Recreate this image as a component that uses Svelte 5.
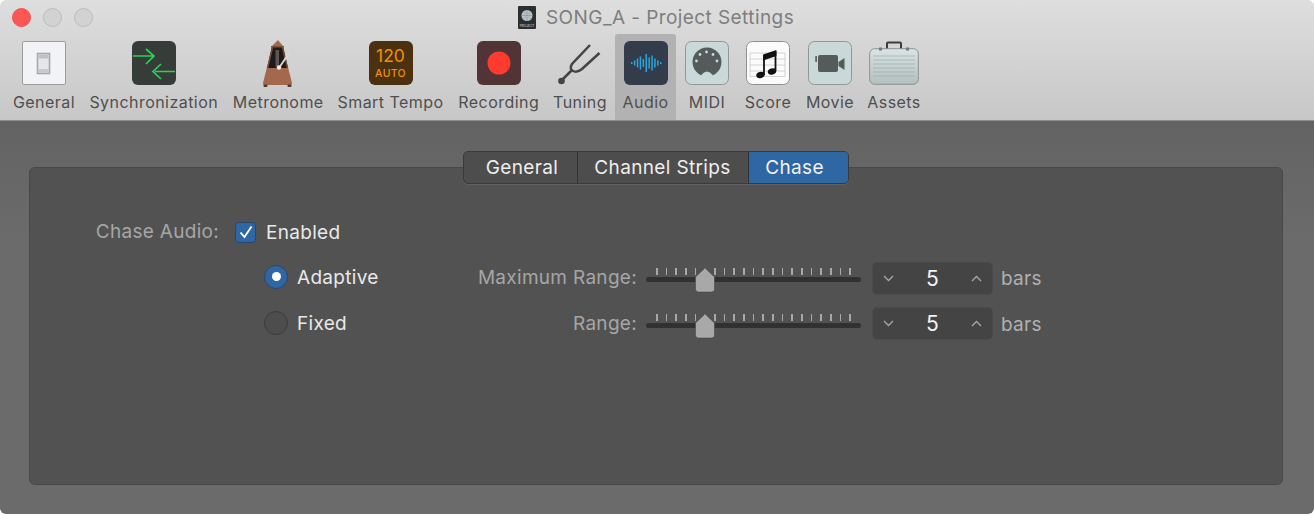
<script>
  const ticks = Array.from({ length: 21 }, (_, i) => i);
  const rows = [
    { label: 'Maximum Range:', value: 5 },
    { label: 'Range:', value: 5 }
  ];
  const bars = [2, 5, 9, 13, 8, 18, 11, 15, 9, 5, 2];
</script>

<div class="window">
  <header class="chrome">
    <div class="titlebar">
      <span class="dot red"></span>
      <span class="dot"></span>
      <span class="dot"></span>
      <svg class="doc" width="18" height="23" viewBox="0 0 18 23">
        <rect width="18" height="23" rx="1" fill="#2e2e2e" />
        <circle cx="9" cy="9.5" r="5.5" fill="#b9c4cb" />
        <circle cx="9" cy="9.5" r="1.4" fill="#eef2f4" />
        <path d="M9 4v11M3.5 9.5h11M5 5.5l8 8M13 5.5l-8 8" stroke="#7f8a91" stroke-width=".6" />
        <text x="9" y="21" text-anchor="middle" class="doctext">PROJECT</text>
      </svg>
      <span class="title">SONG_A - Project Settings</span>
    </div>

    <nav class="toolbar">
      <div class="tool">
        <svg class="icon" viewBox="0 0 44 44">
          <rect x=".5" y=".5" width="43" height="43" rx="1.5" fill="#f2f3f6" stroke="#9c9c9c" />
          <rect x="15.500" y="12.500" width="12" height="20" fill="#e4e6e8" stroke="#a6a8ab" stroke-width="1.600" />
          <rect x="16.500" y="13.500" width="10" height="4" fill="#bfc2c5" />
          <rect x="16.500" y="28" width="10" height="3.500" fill="#c6c9cc" />
        </svg>
        <span>General</span>
      </div>

      <div class="tool">
        <svg class="icon" viewBox="0 0 44 44">
          <rect width="44" height="44" rx="6" fill="#363c37" />
          <path d="M1 15h20M14 8l8 7-8 8M43 30.500H23M29 23l-8 7.500 8 7.500" fill="none" stroke="#2fcf5c" stroke-width="1.700" />
        </svg>
        <span>Synchronization</span>
      </div>

      <div class="tool">
        <svg class="icon" viewBox="0 0 44 44">
          <path d="M16 5h11l5.200 23H10.800z" fill="#1f1a19" />
          <path d="M16 5L22 -1l5 6z" fill="#a4694d" />
          <path d="M15 5h13v1.500H15z" fill="#7a503c" />
          <path d="M10.800 27h21.400L36 42q.2 2-1 2H8q-1.200 0-1-2z" fill="#a4694d" />
          <path d="M16 6l-5.200 21h1.500l5-21zM27 6l5.200 21h-1.500l-5-21z" fill="#7a503c" />
          <rect x="7.500" y="43.500" width="4" height="2.500" rx="1" fill="#4a3a33" />
          <rect x="31.500" y="43.500" width="4" height="2.500" rx="1" fill="#4a3a33" />
          <rect x="19.500" y="9" width="3.500" height="17" fill="#5c5553" />
          <path d="M23 27L33 12" stroke="#d9d9d9" stroke-width="1.800" />
          <circle cx="23" cy="26.500" r="2.200" fill="#eee" />
        </svg>
        <span>Metronome</span>
      </div>

      <div class="tool">
        <div class="tempo">
          <span class="bpm">120</span>
          <span class="auto">AUTO</span>
        </div>
        <span>Smart Tempo</span>
      </div>

      <div class="tool">
        <svg class="icon" viewBox="0 0 44 44">
          <rect width="44" height="44" rx="6" fill="#523437" />
          <circle cx="22" cy="22" r="11.500" fill="#ff3b30" />
        </svg>
        <span>Recording</span>
      </div>

      <div class="tool tune">
        <svg class="icon" viewBox="0 0 44 44">
          <path d="M32 4L14 23Q11 28 15 30T24 28L41.500 12" fill="none" stroke="#444" stroke-width="2.500" />
          <path d="M14 29L4 39" stroke="#444" stroke-width="2.500" />
          <circle cx="3.500" cy="40" r="3.300" fill="#444" />
        </svg>
        <span>Tuning</span>
      </div>

      <div class="tool active">
        <svg class="icon" viewBox="0 0 44 44">
          <rect width="44" height="44" rx="6" fill="#323c4a" />
          {#each bars as b, i}
            <rect x={7 + i * 2.900} y={22 - b / 2} width="1.500" height={b} fill="#2aa6dc" />
          {/each}
        </svg>
        <span>Audio</span>
      </div>

      <div class="tool">
        <svg class="icon" viewBox="0 0 44 44">
          <rect x=".5" y=".5" width="43" height="43" rx="6" fill="#c9d8d8" stroke="#8f9797" />
          <path d="M16 34.200A14.500 14.500 0 1 1 28 34.200Q22 27 16 34.200Z" fill="#555b5b" />
          <g fill="#c9d8d8">
            <circle cx="21.500" cy="11" r="1.400" /><circle cx="15" cy="13.500" r="1.400" /><circle cx="28" cy="13.500" r="1.400" />
            <circle cx="11.500" cy="20" r="1.400" /><circle cx="32" cy="20" r="1.400" />
          </g>
        </svg>
        <span>MIDI</span>
      </div>

      <div class="tool">
        <svg class="icon" viewBox="0 0 44 44">
          <rect x=".5" y=".5" width="43" height="43" rx="6" fill="#fbfbfb" stroke="#8f8f8f" />
          <path d="M4 12h35M4 18h35M4 24h35M4 30h35M4 35.500h35M4 12v23.500M39 12v23.500" stroke="#c9c9c9" stroke-width=".8" fill="none" />
          <path d="M18 14v20M29.500 10v20" stroke="#111" stroke-width="1.800" />
          <path d="M17.100 13.500l13.300-4.500v6l-13.300 4.500z" fill="#111" />
          <ellipse cx="14.500" cy="34" rx="4.300" ry="3.100" transform="rotate(-18 14.500 34)" fill="#111" />
          <ellipse cx="26" cy="30.500" rx="4.300" ry="3.100" transform="rotate(-18 26 30.500)" fill="#111" />
        </svg>
        <span>Score</span>
      </div>

      <div class="tool">
        <svg class="icon" viewBox="0 0 44 44">
          <rect x=".5" y=".5" width="43" height="43" rx="6" fill="#c9d8d8" stroke="#8f9797" />
          <rect x="10" y="14" width="20" height="17" rx="2" fill="#555b5b" />
          <rect x="7.300" y="15" width="1.600" height="6" fill="#555b5b" />
          <path d="M30.500 21l6-4v12l-6-4z" fill="#555b5b" />
        </svg>
        <span>Movie</span>
      </div>

      <div class="tool">
        <svg class="icon wide" viewBox="0 0 50 44">
          <defs>
            <linearGradient id="case" x1="0" y1="0" x2="0" y2="1">
              <stop offset="0" stop-color="#dbe4e4" />
              <stop offset="1" stop-color="#b3bfbf" />
            </linearGradient>
          </defs>
          <path d="M18 8V2.500q0-1 1-1h12q1 0 1 1V8" fill="none" stroke="#3c3c3c" stroke-width="2" />
          <rect x=".7" y="7.700" width="48.600" height="35.600" rx="5" fill="url(#case)" stroke="#8a9292" />
          <path d="M4 15h42M4 19h42M4 23h42M4 27h42M4 31h42M4 35h42" stroke="#9fadad" stroke-width=".7" />
          <rect x="10" y="6.500" width="3" height="3" fill="#777" />
          <rect x="37" y="6.500" width="3" height="3" fill="#777" />
        </svg>
        <span>Assets</span>
      </div>
    </nav>
  </header>

  <main class="body">
    <div class="segmented">
      <span class="seg one">General</span>
      <span class="seg two">Channel Strips</span>
      <span class="seg three">Chase</span>
    </div>

    <section class="panel">
      <div class="form">
        <span class="lead">Chase Audio:</span>
        <div class="check">
          <span class="box">
            <svg width="14" height="14" viewBox="0 0 14 14">
              <path d="M1.500 7.500L5.500 12 12.500 1.500" fill="none" stroke="#fff" stroke-width="1.800" />
            </svg>
          </span>
          <span class="opt">Enabled</span>
        </div>

        {#each rows as row, i}
          <div class="radio">
            <span class="disc" class:on={i === 0}></span>
            <span class="opt">{i === 0 ? 'Adaptive' : 'Fixed'}</span>
          </div>
          <span class="rlabel">{row.label}</span>
          <div class="slider">
            <div class="ticks">
              {#each ticks as t (t)}<i></i>{/each}
            </div>
            <div class="track"></div>
            <svg class="thumb" width="22" height="26" viewBox="0 0 22 26">
              <path d="M11 1L20.500 10V22q0 3-3 3H4.500q-3 0-3-3V10z" fill="#a8a8a8" stroke="#3f3f3f" stroke-width=".5" />
            </svg>
          </div>
          <div class="stepper" class:low={i === 1}>
            <svg width="11" height="7" viewBox="0 0 11 7"><path d="M1 1l4.500 4.500L10 1" fill="none" stroke="#a8a8a8" stroke-width="1.300" /></svg>
            <span class="val">{row.value}</span>
            <svg width="11" height="7" viewBox="0 0 11 7"><path d="M1 6l4.500-4.500L10 6" fill="none" stroke="#a8a8a8" stroke-width="1.300" /></svg>
          </div>
          <span class="unit">bars</span>
        {/each}
      </div>
    </section>
  </main>
</div>

<style>
  :global(body) {
    margin: 0;
    background: #fff;
  }

  .window {
    width: 1314px;
    height: 514px;
    display: flex;
    flex-direction: column;
    border-radius: 6px;
    overflow: hidden;
    font-family: Inter, "Liberation Sans", sans-serif;
  }

  .chrome {
    height: 120px;
    background: linear-gradient(#dedede, #c7c7c7);
    border-bottom: 1px solid #8e8e8e;
    box-sizing: content-box;
  }

  .titlebar {
    height: 34px;
    display: flex;
    align-items: center;
    padding-left: 12px;
    gap: 12px;
  }

  .dot {
    width: 17px;
    height: 17px;
    border-radius: 50%;
    background: #d2d2d2;
    border: 1px solid #bcbcbc;
    flex: none;
  }

  .dot.red {
    background: #fc5753;
    border-color: #ee5050;
  }

  .doc {
    margin-left: 413px;
    flex: none;
  }

  .doctext {
    font-size: 3.200px;
    fill: #ddd;
  }

  .title {
    margin: 1px 0 0 -2px;
    font-size: 19px;
    letter-spacing: .42px;
    color: #7e7e7e;
  }

  .toolbar {
    height: 86px;
    display: grid;
    grid-template-columns: 75px 144.500px 104.500px 120px 96.500px 68px 61px 62px 60px 64px 64px;
    padding-left: 6.500px;
  }

  .tool {
    display: flex;
    flex-direction: column;
    align-items: center;
    padding-top: 7px;
    color: #4f4f4f;
    font-size: 16px;
    letter-spacing: .45px;
    white-space: nowrap;
  }

  .tool > span {
    margin-top: 7px;
    line-height: 20px;
  }

  .tool.tune {
    padding-right: 2px;
  }

  .tool.active {
    background: #b2b2b2;
    border-radius: 3px 3px 0 0;
  }

  .icon {
    width: 44px;
    height: 44px;
    flex: none;
    overflow: visible;
  }

  .icon.wide {
    width: 50px;
  }

  .tempo {
    width: 44px;
    height: 44px;
    box-sizing: border-box;
    border-radius: 6px;
    background: #4c3110;
    color: #f0900c;
    display: flex;
    flex-direction: column;
    align-items: center;
    line-height: 1;
    letter-spacing: 0;
  }

  .tempo .bpm {
    font-size: 17.500px;
    margin-top: 5px;
    line-height: 20px;
  }

  .tempo .auto {
    font-size: 10.500px;
    font-weight: 500;
    letter-spacing: .3px;
    margin-top: 2px;
    line-height: 12px;
  }

  .body {
    flex: 1;
    background: linear-gradient(#636363, #6b6b6b 30%);
    padding: 30px 31px 29px 29px;
    display: flex;
    flex-direction: column;
    align-items: center;
  }

  .segmented {
    width: 386px;
    height: 33px;
    flex: none;
    box-sizing: border-box;
    display: grid;
    grid-template-columns: 114px 171px 1fr;
    position: relative;
    z-index: 1;
    margin: 0 0 -17px -1px;
    background: #4d4d4d;
    border: 1px solid #3a3a3a;
    border-radius: 5px;
    overflow: hidden;
    color: #eee;
    font-size: 19px;
    letter-spacing: .35px;
    box-shadow: 0 1px 0 #5f5f5f;
  }

  .seg {
    display: flex;
    align-items: center;
    justify-content: center;
  }

  .seg.one,
  .seg.two {
    border-right: 1px solid #333;
  }

  .seg.one {
    padding-left: 4px;
  }

  .seg.three {
    background: #2f67a4;
    color: #f2f2f2;
    padding-right: 7px;
  }

  .panel {
    width: 100%;
    flex: 1;
    box-sizing: border-box;
    background: #525252;
    border: 1px solid #484848;
    border-radius: 6px;
    padding-top: 41px;
  }

  .form {
    display: grid;
    grid-template-columns: 205px 225px 177px 224px 129px auto;
    grid-template-rows: 46px 46px 46px;
    align-items: center;
    justify-content: start;
    font-size: 19px;
    letter-spacing: .3px;
  }

  .lead,
  .rlabel {
    color: #a6a6a6;
    text-align: right;
    white-space: nowrap;
    margin-bottom: 2px;
  }

  .lead {
    padding-right: 16px;
  }

  .check {
    grid-column: 2 / -1;
    display: flex;
    align-items: center;
    gap: 10px;
  }

  .box {
    width: 21px;
    height: 21px;
    box-sizing: border-box;
    border-radius: 4px;
    background: #2f67a4;
    border: 1px solid #28476b;
    display: flex;
    align-items: center;
    justify-content: center;
  }

  .opt {
    color: #e9e9e9;
    white-space: nowrap;
  }

  .radio {
    grid-column: 2;
    display: flex;
    align-items: center;
    gap: 9px;
    padding-left: 29px;
    margin-bottom: 3px;
  }

  .radio .opt {
    margin-top: 2px;
  }

  .disc {
    width: 24px;
    height: 24px;
    box-sizing: border-box;
    border-radius: 50%;
    background: #4d4d4d;
    border: 1px solid #3b3b3b;
    display: flex;
    align-items: center;
    justify-content: center;
    flex: none;
  }

  .disc.on {
    background: #2f67a4;
    border-color: #28476b;
  }

  .disc.on::after {
    content: "";
    width: 9px;
    height: 9px;
    border-radius: 50%;
    background: #fff;
  }

  .slider {
    position: relative;
    height: 46px;
    margin-left: 9px;
    width: 215px;
  }

  .ticks {
    display: flex;
    justify-content: space-between;
    padding: 13px 10px 0;
    height: 7px;
    box-sizing: content-box;
  }

  .ticks i {
    width: 1.500px;
    height: 7px;
    background: #a8a8a8;
  }

  .track {
    height: 5px;
    margin-top: 2px;
    border-radius: 3px;
    background: #313131;
  }

  .thumb {
    position: absolute;
    left: 48px;
    top: 12px;
  }

  .stepper {
    width: 121px;
    height: 33px;
    box-sizing: border-box;
    margin-left: 11px;
    padding: 0 10px;
    border-radius: 5px;
    background: #444;
    border: 1px solid #4b4b4b;
    display: flex;
    align-items: center;
    justify-content: space-between;
  }

  .stepper.low {
    margin-bottom: 1px;
  }

  .val {
    color: #f2f2f2;
    font-size: 21px;
  }

  .unit {
    margin-left: 11px;
    color: #b0b0b0;
  }
</style>
